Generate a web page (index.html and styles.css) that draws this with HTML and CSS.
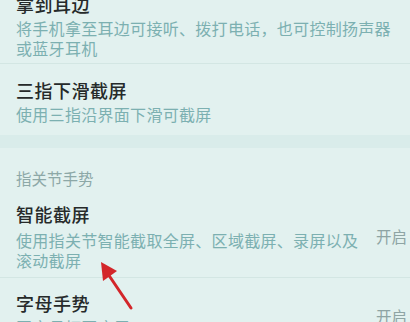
FILE: index.html
```html
<!DOCTYPE html>
<html lang="zh-CN">
<head>
<meta charset="utf-8">
<link rel="stylesheet" href="styles.css">
</head>
<body>
<div class="page">
  <section class="group group-top">
    <div class="item item-first">
      <div class="item-text">
        <div class="title">拿到耳边</div>
        <div class="desc">将手机拿至耳边可接听、拨打电话，也可控制扬声器或蓝牙耳机</div>
      </div>
    </div>
    <div class="item item-second">
      <div class="item-text">
        <div class="title">三指下滑截屏</div>
        <div class="desc">使用三指沿界面下滑可截屏</div>
      </div>
    </div>
  </section>
  <div class="band"></div>
  <section class="group">
    <div class="group-header">指关节手势</div>
    <div class="item item-third">
      <div class="item-text">
        <div class="title">智能截屏</div>
        <div class="desc">使用指关节智能截取全屏、区域截屏、录屏以及滚动截屏</div>
      </div>
      <div class="status">开启</div>
    </div>
    <div class="item item-fourth">
      <div class="item-text">
        <div class="title">字母手势</div>
        <div class="desc">画字母打开应用</div>
      </div>
      <div class="status status-low">开启</div>
    </div>
  </section>
  <svg class="arrow" width="410" height="322" viewBox="0 0 410 322">
    <line x1="131" y1="308" x2="108" y2="274" stroke="#d3262a" stroke-width="3" stroke-linecap="round"/>
    <polygon points="101,262 103,281 117,271" fill="#d3262a"/>
  </svg>
</div>
</body>
</html>
```

FILE: styles.css
```css
html, body {
  margin: 0;
  padding: 0;
  background: #e2f1ef;
}

.page {
  position: relative;
  width: 410px;
  height: 322px;
  overflow: hidden;
  font-family: "Noto Sans CJK SC", "Noto Sans", sans-serif;
}

.group-top {
  margin-top: -8px;
}

.item {
  display: flex;
  align-items: center;
  gap: 14px;
  padding-left: 16px;
  padding-right: 3px;
}

.item + .item {
  border-top: 1px solid #d3e6e3;
}

.item-text {
  flex: 1;
  min-width: 0;
}

.item-first {
  padding-right: 16px;
  padding-bottom: 5px;
}

.item-second {
  padding-top: 14px;
  padding-bottom: 11px;
}

.item-third {
  padding-top: 0;
  padding-bottom: 7px;
}

.item-fourth {
  padding-top: 13px;
  padding-bottom: 12px;
}

.title {
  font-size: 18px;
  line-height: 24px;
  font-weight: 500;
  color: #262a2a;
  letter-spacing: 0.5px;
}

.desc {
  font-size: 16px;
  line-height: 20px;
  color: #7cb0b1;
  letter-spacing: 0.3px;
  margin-top: 2px;
}

.item-third .desc {
  margin-top: 4px;
}

.band {
  height: 13px;
  margin-top: 0;
  background: #d9ecea;
}

.group-header {
  padding-left: 16px;
  padding-top: 20px;
  padding-bottom: 14px;
  font-size: 15.5px;
  line-height: 20px;
  color: #8da8a7;
}

.status {
  width: 31px;
  font-size: 15.5px;
  line-height: 20px;
  color: #8ea4a4;
  white-space: nowrap;
}

.status-low {
  align-self: flex-start;
  margin-top: 15px;
}

.arrow {
  position: absolute;
  left: 0;
  top: 0;
  pointer-events: none;
}
```
